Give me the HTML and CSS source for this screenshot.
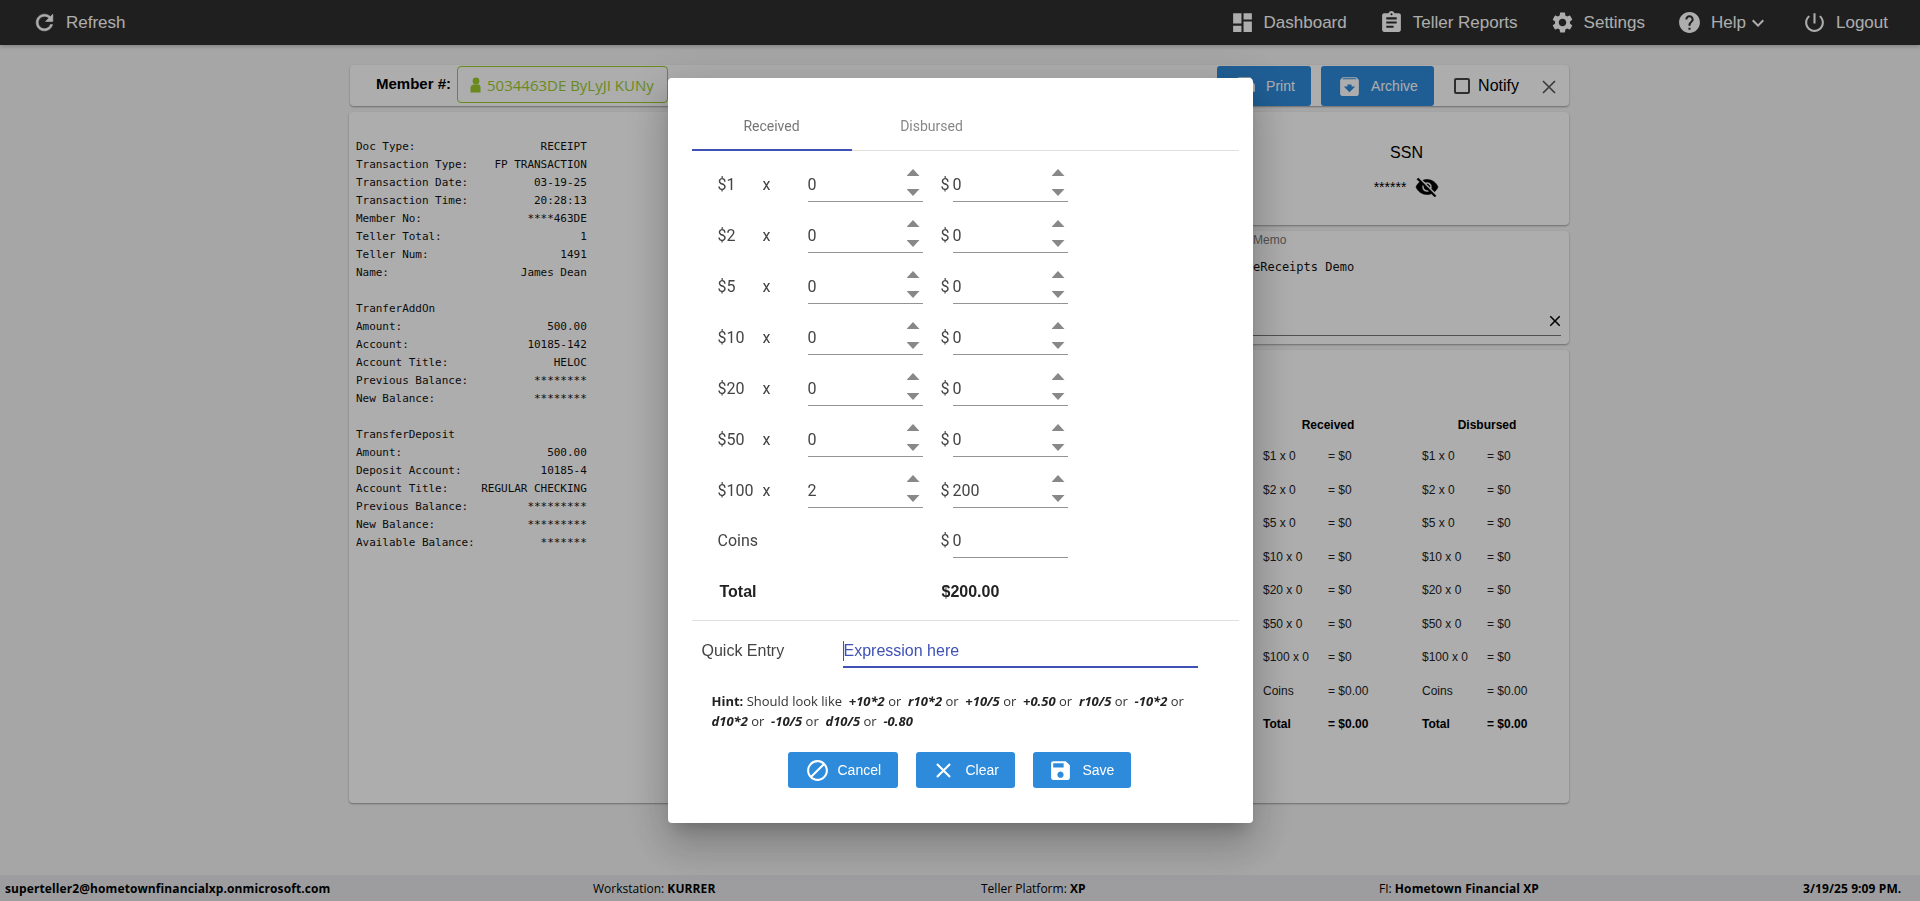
FILE: index.html
```html
<!DOCTYPE html>
<html lang="en">
<head>
    <meta charset="UTF-8">
    <meta name="viewport" content="width=device-width, initial-scale=1.0">
    <title>Teller Receipts</title>
    <link rel="stylesheet" href="styles.css">
</head>
<body>
    <nav class="navbar">
        <a class="nav-item">
            <svg class="nav-icon nav-refresh" viewBox="0 0 24 24"><path d="M17.65 6.35C16.2 4.9 14.21 4 12 4c-4.42 0-7.99 3.58-7.99 8s3.57 8 7.99 8c3.73 0 6.84-2.55 7.73-6h-2.08c-.82 2.33-3.04 4-5.65 4-3.31 0-6-2.69-6-6s2.69-6 6-6c1.66 0 3.14.69 4.22 1.78L13 11h7V4l-2.35 2.35z"/></svg>
            Refresh
        </a>
        <div class="nav-right">
            <a class="nav-item">
                <svg class="nav-icon" viewBox="0 0 24 24"><path d="M3 13h8V3H3v10zm0 8h8v-6H3v6zm10 0h8V11h-8v10zm0-18v6h8V3h-8z"/></svg>
                Dashboard
            </a>
            <a class="nav-item">
                <svg class="nav-icon" viewBox="0 0 24 24"><path d="M19 3h-4.18C14.4 1.84 13.3 1 12 1c-1.3 0-2.4.84-2.82 2H5c-1.1 0-2 .9-2 2v14c0 1.1.9 2 2 2h14c1.1 0 2-.9 2-2V5c0-1.1-.9-2-2-2zm-7 0c.55 0 1 .45 1 1s-.45 1-1 1-1-.45-1-1 .45-1 1-1zm2 14H7v-2h7v2zm3-4H7v-2h10v2zm0-4H7V7h10v2z"/></svg>
                Teller Reports
            </a>
            <a class="nav-item">
                <svg class="nav-icon" viewBox="0 0 24 24"><path d="M19.14 12.94c.04-.3.06-.61.06-.94 0-.32-.02-.64-.07-.94l2.03-1.58c.18-.14.23-.41.12-.61l-1.92-3.32c-.12-.22-.37-.29-.59-.22l-2.39.96c-.5-.38-1.03-.7-1.62-.94l-.36-2.54c-.04-.24-.24-.41-.48-.41h-3.84c-.24 0-.43.17-.47.41l-.36 2.54c-.59.24-1.13.57-1.62.94l-2.39-.96c-.22-.08-.47 0-.59.22L2.74 8.87c-.12.21-.08.47.12.61l2.03 1.58c-.05.3-.09.63-.09.94s.02.64.07.94l-2.03 1.58c-.18.14-.23.41-.12.61l1.92 3.32c.12.22.37.29.59.22l2.39-.96c.5.38 1.03.7 1.62.94l.36 2.54c.05.24.24.41.48.41h3.84c.24 0 .44-.17.47-.41l.36-2.54c.59-.24 1.13-.56 1.62-.94l2.39.96c.22.08.47 0 .59-.22l1.92-3.32c.12-.22.07-.47-.12-.61l-2.01-1.58zM12 15.6c-1.98 0-3.6-1.62-3.6-3.6s1.62-3.6 3.6-3.6 3.6 1.62 3.6 3.6-1.62 3.6-3.6 3.6z"/></svg>
                Settings
            </a>
            <a class="nav-item">
                <svg class="nav-icon" viewBox="0 0 24 24"><path d="M12 2C6.48 2 2 6.48 2 12s4.48 10 10 10 10-4.48 10-10S17.52 2 12 2zm1 17h-2v-2h2v2zm2.07-7.75l-.9.92C13.45 12.9 13 13.5 13 15h-2v-.5c0-1.1.45-2.1 1.17-2.83l1.24-1.26c.37-.36.59-.86.59-1.41 0-1.1-.9-2-2-2s-2 .9-2 2H8c0-2.21 1.79-4 4-4s4 1.79 4 4c0 .88-.36 1.68-.93 2.25z"/></svg>
                Help
                <svg class="nav-caret" viewBox="0 0 24 24"><path d="M16.59 8.59L12 13.17 7.41 8.59 6 10l6 6 6-6z"/></svg>
            </a>
            <a class="nav-item">
                <svg class="nav-icon" viewBox="0 0 24 24"><path d="M13 3h-2v10h2V3zm4.83 2.17l-1.42 1.42C17.99 7.86 19 9.81 19 12c0 3.87-3.13 7-7 7s-7-3.13-7-7c0-2.19 1.01-4.14 2.58-5.42L6.17 5.17C4.23 6.82 3 9.26 3 12c0 4.97 4.03 9 9 9s9-4.03 9-9c0-2.74-1.23-5.18-3.17-6.83z"/></svg>
                Logout
            </a>
        </div>
    </nav>

    <main class="content">
        <div class="toolbar card">
            <span class="member-label">Member #:</span>
            <div class="member-box">
                <svg class="member-icon" viewBox="0 0 12 16"><circle cx="6" cy="4" r="3.4"/><path d="M0.5 15.5V11c0-2.2 1.6-3.6 3-3.6h5c1.4 0 2 1.4 2 3.6v4.5z"/></svg>
                5034463DE ByLyJI KUNy
            </div>
            <div class="toolbar-actions">
                <button class="tool-btn print-btn">
                    <svg class="tool-icon" viewBox="0 0 24 24"><path d="M19 8H5c-1.66 0-3 1.34-3 3v6h4v4h12v-4h4v-6c0-1.66-1.34-3-3-3zm-3 11H8v-5h8v5zm3-7c-.55 0-1-.45-1-1s.45-1 1-1 1 .45 1 1-.45 1-1 1zm-1-9H6v4h12V3z"/></svg>
                    Print
                </button>
                <button class="tool-btn archive-btn">
                    <svg class="tool-icon" viewBox="0 0 24 24"><path d="M20.54 5.23l-1.39-1.68C18.88 3.21 18.47 3 18 3H6c-.47 0-.88.21-1.16.55L3.46 5.23C3.17 5.57 3 6.02 3 6.5V19c0 1.1.9 2 2 2h14c1.1 0 2-.9 2-2V6.5c0-.48-.17-.93-.46-1.27zM12 17.5L6.5 12H10v-2h4v2h3.5L12 17.5zM5.12 5l.81-1h12l.94 1H5.12z"/></svg>
                    Archive
                </button>
                <label class="notify">
                    <span class="checkbox"></span>
                    Notify
                </label>
                <svg class="toolbar-close" viewBox="0 0 14 14"><path d="M1 1l12 12M13 1L1 13"/></svg>
            </div>
        </div>

        <div class="columns">
            <section class="card receipt-card">
<pre class="receipt">Doc Type:                   RECEIPT
Transaction Type:    FP TRANSACTION
Transaction Date:          03-19-25
Transaction Time:          20:28:13
Member No:                ****463DE
Teller Total:                     1
Teller Num:                    1491
Name:                    James Dean

TranferAddOn
Amount:                      500.00
Account:                  10185-142
Account Title:                HELOC
Previous Balance:          ********
New Balance:               ********

TransferDeposit
Amount:                      500.00
Deposit Account:            10185-4
Account Title:     REGULAR CHECKING
Previous Balance:         *********
New Balance:              *********
Available Balance:          *******</pre>
            </section>

            <aside class="side">
                <section class="card ssn-card">
                    <div class="ssn-title">SSN</div>
                    <div class="ssn-value">
                        ******
                        <svg class="eye-icon" viewBox="0 0 24 24"><path d="M12 7c2.76 0 5 2.24 5 5 0 .65-.13 1.26-.36 1.83l2.92 2.92c1.51-1.26 2.7-2.89 3.43-4.75-1.73-4.39-6-7.5-11-7.5-1.4 0-2.74.25-3.98.7l2.16 2.16C10.74 7.13 11.35 7 12 7zM2 4.27l2.28 2.28.46.46C3.08 8.3 1.78 10.02 1 12c1.73 4.39 6 7.5 11 7.5 1.55 0 3.03-.3 4.38-.84l.42.42L19.73 22 21 20.73 3.27 3 2 4.27zM7.53 9.8l1.55 1.55c-.05.21-.08.43-.08.65 0 1.66 1.34 3 3 3 .22 0 .44-.03.65-.08l1.55 1.55c-.67.33-1.41.53-2.2.53-2.76 0-5-2.24-5-5 0-.79.2-1.53.53-2.2zm4.31-.78l3.15 3.15.02-.16c0-1.66-1.34-3-3-3l-.17.01z"/></svg>
                    </div>
                </section>
                <section class="card memo-card">
                    <div class="memo-label">Memo</div>
                    <div class="memo-text">eReceipts Demo</div>
                    <div class="memo-line">
                        <svg class="memo-clear" viewBox="0 0 24 24"><path d="M19 6.41L17.59 5 12 10.59 6.41 5 5 6.41 10.59 12 5 17.59 6.41 19 12 13.41 17.59 19 19 17.59 13.41 12z"/></svg>
                    </div>
                </section>
                <section class="card denom-card">
                    <div class="denom-col">
                        <div class="denom-head">Received</div>
                        <div class="denom-row"><span>$1 x 0</span><span>= $0</span></div>
                        <div class="denom-row"><span>$2 x 0</span><span>= $0</span></div>
                        <div class="denom-row"><span>$5 x 0</span><span>= $0</span></div>
                        <div class="denom-row"><span>$10 x 0</span><span>= $0</span></div>
                        <div class="denom-row"><span>$20 x 0</span><span>= $0</span></div>
                        <div class="denom-row"><span>$50 x 0</span><span>= $0</span></div>
                        <div class="denom-row"><span>$100 x 0</span><span>= $0</span></div>
                        <div class="denom-row"><span>Coins</span><span>= $0.00</span></div>
                        <div class="denom-row denom-total"><span>Total</span><span>= $0.00</span></div>
                    </div>
                    <div class="denom-col">
                        <div class="denom-head">Disbursed</div>
                        <div class="denom-row"><span>$1 x 0</span><span>= $0</span></div>
                        <div class="denom-row"><span>$2 x 0</span><span>= $0</span></div>
                        <div class="denom-row"><span>$5 x 0</span><span>= $0</span></div>
                        <div class="denom-row"><span>$10 x 0</span><span>= $0</span></div>
                        <div class="denom-row"><span>$20 x 0</span><span>= $0</span></div>
                        <div class="denom-row"><span>$50 x 0</span><span>= $0</span></div>
                        <div class="denom-row"><span>$100 x 0</span><span>= $0</span></div>
                        <div class="denom-row"><span>Coins</span><span>= $0.00</span></div>
                        <div class="denom-row denom-total"><span>Total</span><span>= $0.00</span></div>
                    </div>
                </section>
            </aside>
        </div>
    </main>

    <footer class="footer">
        <b>superteller2@hometownfinancialxp.onmicrosoft.com</b>
        <span>Workstation: <b>KURRER</b></span>
        <span>Teller Platform: <b>XP</b></span>
        <span>FI: <b>Hometown Financial XP</b></span>
        <b>3/19/25 9:09 PM.</b>
    </footer>

    <div class="overlay">
        <div class="modal">
            <div class="tabs">
                <div class="tab tab-active">Received</div>
                <div class="tab">Disbursed</div>
            </div>

            <div class="bills">
                <div class="bill-row">
                    <span class="bill-name">$1</span><span class="bill-x">x</span>
                    <div class="field">0<span class="spinner"><i class="up"></i><i class="down"></i></span></div>
                    <span class="bill-dollar">$</span>
                    <div class="field">0<span class="spinner"><i class="up"></i><i class="down"></i></span></div>
                </div>
                <div class="bill-row">
                    <span class="bill-name">$2</span><span class="bill-x">x</span>
                    <div class="field">0<span class="spinner"><i class="up"></i><i class="down"></i></span></div>
                    <span class="bill-dollar">$</span>
                    <div class="field">0<span class="spinner"><i class="up"></i><i class="down"></i></span></div>
                </div>
                <div class="bill-row">
                    <span class="bill-name">$5</span><span class="bill-x">x</span>
                    <div class="field">0<span class="spinner"><i class="up"></i><i class="down"></i></span></div>
                    <span class="bill-dollar">$</span>
                    <div class="field">0<span class="spinner"><i class="up"></i><i class="down"></i></span></div>
                </div>
                <div class="bill-row">
                    <span class="bill-name">$10</span><span class="bill-x">x</span>
                    <div class="field">0<span class="spinner"><i class="up"></i><i class="down"></i></span></div>
                    <span class="bill-dollar">$</span>
                    <div class="field">0<span class="spinner"><i class="up"></i><i class="down"></i></span></div>
                </div>
                <div class="bill-row">
                    <span class="bill-name">$20</span><span class="bill-x">x</span>
                    <div class="field">0<span class="spinner"><i class="up"></i><i class="down"></i></span></div>
                    <span class="bill-dollar">$</span>
                    <div class="field">0<span class="spinner"><i class="up"></i><i class="down"></i></span></div>
                </div>
                <div class="bill-row">
                    <span class="bill-name">$50</span><span class="bill-x">x</span>
                    <div class="field">0<span class="spinner"><i class="up"></i><i class="down"></i></span></div>
                    <span class="bill-dollar">$</span>
                    <div class="field">0<span class="spinner"><i class="up"></i><i class="down"></i></span></div>
                </div>
                <div class="bill-row">
                    <span class="bill-name">$100</span><span class="bill-x">x</span>
                    <div class="field">2<span class="spinner"><i class="up"></i><i class="down"></i></span></div>
                    <span class="bill-dollar">$</span>
                    <div class="field">200<span class="spinner"><i class="up"></i><i class="down"></i></span></div>
                </div>
                <div class="bill-row coins-row">
                    <span class="coins-name">Coins</span>
                    <span class="bill-dollar">$</span>
                    <div class="field">0</div>
                </div>
                <div class="total-row">
                    <span>Total</span>
                    <span>$200.00</span>
                </div>
            </div>

            <div class="quick">
                <span class="quick-label">Quick Entry</span>
                <div class="quick-input"><span class="caret"></span>Expression here</div>
            </div>

            <p class="hint"><b>Hint:</b> Should look like &nbsp;<b><i>+10*2</i></b> or &nbsp;<b><i>r10*2</i></b> or &nbsp;<b><i>+10/5</i></b> or &nbsp;<b><i>+0.50</i></b> or &nbsp;<b><i>r10/5</i></b> or &nbsp;<b><i>-10*2</i></b> or<br><b><i>d10*2</i></b> or &nbsp;<b><i>-10/5</i></b> or &nbsp;<b><i>d10/5</i></b> or &nbsp;<b><i>-0.80</i></b></p>

            <div class="modal-actions">
                <button class="modal-btn btn-cancel">
                    <svg class="btn-icon" viewBox="0 0 24 24"><path d="M12 2C6.48 2 2 6.48 2 12s4.48 10 10 10 10-4.48 10-10S17.52 2 12 2zM4 12c0-4.42 3.58-8 8-8 1.85 0 3.55.63 4.9 1.69L5.69 16.9C4.63 15.55 4 13.85 4 12zm8 8c-1.85 0-3.55-.63-4.9-1.69L18.31 7.1C19.37 8.45 20 10.15 20 12c0 4.42-3.58 8-8 8z"/></svg>
                    Cancel
                </button>
                <button class="modal-btn btn-clear">
                    <svg class="btn-icon" viewBox="0 0 24 24"><path d="M19 6.41L17.59 5 12 10.59 6.41 5 5 6.41 10.59 12 5 17.59 6.41 19 12 13.41 17.59 19 19 17.59 13.41 12z"/></svg>
                    Clear
                </button>
                <button class="modal-btn btn-save">
                    <svg class="btn-icon" viewBox="0 0 24 24"><path d="M17 3H5c-1.11 0-2 .9-2 2v14c0 1.1.89 2 2 2h14c1.1 0 2-.9 2-2V7l-4-4zm-5 16c-1.66 0-3-1.34-3-3s1.34-3 3-3 3 1.34 3 3-1.34 3-3 3zm3-10H5V5h10v4z"/></svg>
                    Save
                </button>
            </div>
        </div>
    </div>
</body>
</html>
```

FILE: styles.css
```css
* {
    box-sizing: border-box;
}

html, body {
    height: 100%;
    margin: 0;
}

body {
    display: flex;
    flex-direction: column;
    overflow: hidden;
    background-color: #f5f5f5;
    color: #111;
    font-family: "Liberation Sans", Arial, sans-serif;
}

/* top bar */
.navbar {
    display: flex;
    justify-content: space-between;
    align-items: center;
    height: 45px;
    flex: none;
    padding: 0 32px;
    background-color: #2e2e2e;
    color: #fff;
    box-shadow: 0 2px 4px rgba(0, 0, 0, 0.2);
}

.nav-right {
    display: flex;
    align-items: center;
    gap: 32px;
}

.nav-item {
    display: flex;
    align-items: center;
    gap: 9px;
    font-size: 17px;
}

.nav-icon {
    width: 25px;
    height: 25px;
    fill: #fff;
}

.nav-refresh {
    stroke: #fff;
    stroke-width: 0.6;
}

.nav-caret {
    width: 24px;
    height: 24px;
    margin-left: -9px;
    fill: #fff;
}

/* page */
.content {
    flex: 1;
    display: flex;
    flex-direction: column;
    gap: 6px;
    padding: 20px 351px 0 349px;
}

.card {
    background-color: #fff;
    border-radius: 4px;
    box-shadow: 0 1px 2px rgba(0, 0, 0, 0.35);
}

.toolbar {
    display: flex;
    align-items: flex-start;
    height: 41px;
    margin-left: 1px;
    flex: none;
}

.member-label {
    margin: 10px 0 0 26px;
    width: 81px;
    font-size: 15px;
    font-weight: bold;
    color: #000;
}

.member-box {
    display: flex;
    align-items: center;
    gap: 5px;
    width: 211px;
    height: 37px;
    margin-top: 1px;
    padding-left: 12px;
    border: 1px solid #9ccc30;
    border-radius: 4px;
    color: #9ccc30;
    font-family: "Open Sans", sans-serif;
    font-size: 15px;
}

.member-icon {
    width: 12px;
    height: 16px;
    fill: #9ccc30;
}

.toolbar-actions {
    display: flex;
    align-items: center;
    margin: 1px 0 0 auto;
    height: 40px;
}

.tool-btn {
    display: flex;
    align-items: center;
    gap: 9px;
    height: 40px;
    border: none;
    border-radius: 3px;
    background-color: #2e8bdb;
    color: #fff;
    font-family: "Liberation Sans", Arial, sans-serif;
    font-size: 14px;
}

.print-btn {
    width: 94px;
    padding-left: 15px;
}

.archive-btn {
    width: 113px;
    margin-left: 10px;
    padding-left: 16px;
}

.tool-icon {
    width: 25px;
    height: 25px;
    fill: #fff;
}

.notify {
    display: flex;
    align-items: center;
    gap: 8px;
    margin-left: 20px;
    font-size: 16px;
    color: #000;
}

.checkbox {
    width: 16px;
    height: 16px;
    border: 2px solid #444;
    border-radius: 2px;
}

.toolbar-close {
    width: 14px;
    height: 14px;
    margin: 2px 13px 0 23px;
    fill: none;
    stroke: #555;
    stroke-width: 1.6;
}

.columns {
    display: flex;
    gap: 6px;
    height: 691px;
    flex: none;
}

.receipt-card {
    width: 889px;
    padding: 26px 7px;
}

.receipt {
    margin: 0;
    font-family: "DejaVu Sans Mono", monospace;
    font-size: 11px;
    letter-spacing: -0.03px;
    line-height: 18px;
    color: #111;
}

.side {
    flex: 1;
    display: flex;
    flex-direction: column;
    gap: 6px;
}

.ssn-card {
    height: 113px;
    padding-top: 31px;
    text-align: center;
}

.ssn-title {
    font-size: 16px;
    line-height: 20px;
    color: #000;
}

.ssn-value {
    display: flex;
    justify-content: center;
    align-items: center;
    gap: 9px;
    margin-top: 12px;
    height: 24px;
    font-size: 14px;
    color: #000;
}

.eye-icon {
    width: 24px;
    height: 24px;
    fill: #000;
    stroke: #000;
    stroke-width: 0.6;
}

.memo-card {
    height: 113px;
    padding: 2px 8px 0 9px;
}

.memo-label {
    font-size: 12px;
    line-height: 14px;
    color: #777;
}

.memo-text {
    margin-top: 12px;
    font-family: "DejaVu Sans Mono", monospace;
    font-size: 12px;
    line-height: 16px;
}

.memo-line {
    display: flex;
    justify-content: flex-end;
    align-items: flex-end;
    height: 61px;
    padding-bottom: 5px;
    border-bottom: 1px solid #777;
}

.memo-clear {
    width: 18px;
    height: 18px;
    margin-right: -3px;
    fill: #000;
}

.denom-card {
    flex: 1;
    display: flex;
    gap: 29px;
    padding: 68px 0 0 19px;
    font-size: 12px;
}

.denom-col {
    width: 130px;
}

.denom-head {
    margin-bottom: 17px;
    line-height: 14px;
    text-align: center;
    font-weight: bold;
    color: #000;
}

.denom-row {
    display: grid;
    grid-template-columns: 65px 1fr;
    height: 33.5px;
    line-height: 14px;
    color: #222;
}

.denom-total {
    font-weight: bold;
    color: #000;
}

/* footer */
.footer {
    display: grid;
    grid-template-columns: 588px 388px 398px 424px 1fr;
    align-items: center;
    height: 26px;
    margin-top: auto;
    flex: none;
    padding-left: 5px;
    background-color: #e7e8ea;
    font-family: "Open Sans", sans-serif;
    font-size: 12px;
    color: #000;
}

.footer b {
    letter-spacing: 0.1px;
}

/* modal */
.overlay {
    position: fixed;
    top: 0;
    right: 0;
    bottom: 0;
    left: 0;
    display: flex;
    justify-content: center;
    align-items: center;
    background-color: rgba(0, 0, 0, 0.32);
}

.modal {
    display: flex;
    flex-direction: column;
    width: 585px;
    height: 745px;
    padding: 0 14px 0 24px;
    border-radius: 4px;
    background-color: #fff;
    color: #444;
    box-shadow: 0 11px 15px -7px rgba(0, 0, 0, 0.2), 0 24px 38px 3px rgba(0, 0, 0, 0.14), 0 9px 46px 8px rgba(0, 0, 0, 0.12);
}

.tabs {
    display: flex;
    height: 73px;
    border-bottom: 1px solid #e0e0e0;
    flex: none;
    padding-top: 24px;
}

.tab {
    width: 160px;
    height: 48px;
    line-height: 48px;
    text-align: center;
    font-family: Roboto, sans-serif;
    font-size: 14px;
    color: #888;
}

.tab-active {
    height: 49px;
    border-bottom: 2px solid #3f51b5;
    color: #777;
}

.bills {
    height: 470px;
    flex: none;
    padding-left: 26px;
    border-bottom: 1px solid #e0e0e0;
    font-family: Roboto, sans-serif;
    font-size: 16px;
}

.bill-row {
    display: flex;
    align-items: flex-end;
    height: 51px;
}

.bill-name {
    width: 45px;
    padding-bottom: 8px;
}

.bill-x {
    width: 45px;
    padding-bottom: 8px;
}

.bill-dollar {
    width: 12px;
    margin-left: 18px;
    padding-bottom: 8px;
}

.coins-row {
    height: 50px;
}

.coins-name {
    width: 90px;
    padding-bottom: 8px;
    margin-right: 115px;
}

.field {
    position: relative;
    width: 115px;
    height: 33px;
    line-height: 31px;
    border-bottom: 1px solid #949494;
}

.spinner {
    position: absolute;
    top: 0;
    right: 3px;
    display: flex;
    flex-direction: column;
    gap: 13px;
    width: 13px;
}

.spinner i {
    width: 13px;
    height: 7px;
    background-color: #888;
}

.spinner .up {
    clip-path: polygon(50% 0, 100% 100%, 0 100%);
}

.spinner .down {
    clip-path: polygon(0 0, 100% 0, 50% 100%);
}

.total-row {
    display: grid;
    grid-template-columns: 222px 1fr;
    margin-top: 24px;
    padding-left: 2px;
    font-family: "Liberation Sans", Arial, sans-serif;
    font-weight: bold;
    color: #222;
    line-height: 20px;
}

.quick {
    display: flex;
    align-items: flex-start;
    margin-top: 16px;
    height: 31px;
    flex: none;
}

.quick-label {
    width: 141px;
    margin-left: 10px;
    line-height: 28px;
    font-size: 16px;
}

.quick-input {
    display: flex;
    width: 355px;
    height: 31px;
    line-height: 28px;
    border-bottom: 2px solid #3f51b5;
    font-size: 16px;
    color: #3f51b5;
}

.caret {
    width: 1px;
    height: 20px;
    margin-top: 4px;
    background-color: #3f51b5;
}

.hint {
    margin: 23px 0 0 20px;
    font-family: "Open Sans", sans-serif;
    font-size: 13px;
    line-height: 20px;
    color: #333;
}

.hint b {
    color: #222;
}

.modal-actions {
    display: flex;
    gap: 18px;
    margin: 21px 0 0 96px;
}

.modal-btn {
    display: flex;
    align-items: center;
    gap: 10px;
    height: 36px;
    padding: 0 0 0 15px;
    border: none;
    border-radius: 3px;
    background-color: #2e8bdb;
    color: #fff;
    font-family: "Liberation Sans", Arial, sans-serif;
    font-size: 14px;
}

.btn-cancel {
    width: 110px;
    padding-left: 17px;
    gap: 8px;
}

.btn-clear {
    width: 99px;
}

.btn-save {
    width: 98px;
}

.btn-icon {
    width: 25px;
    height: 25px;
    fill: #fff;
}
```
